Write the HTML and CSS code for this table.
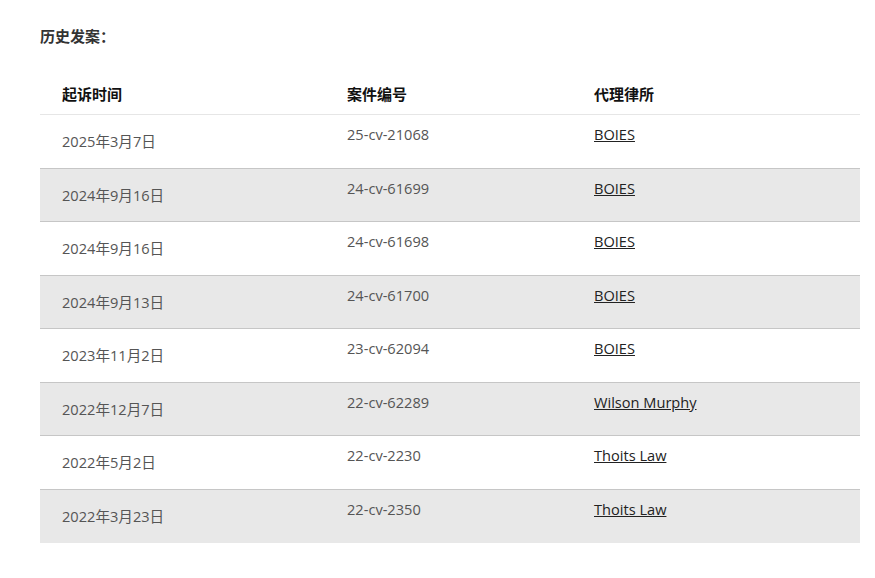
FILE: index.html
```html
<!DOCTYPE html>
<html lang="zh-CN">
<head>
<meta charset="utf-8">
<title>历史发案</title>
<link rel="stylesheet" href="styles.css">
</head>
<body>
<div class="page">
  <h3 class="title">历史发案：</h3>
  <table class="cases">
    <thead>
      <tr>
        <th class="c1">起诉时间</th>
        <th class="c2">案件编号</th>
        <th class="c3">代理律所</th>
      </tr>
    </thead>
    <tbody>
      <tr><td class="date">2025年3月7日</td><td>25-cv-21068</td><td><a href="#">BOIES</a></td></tr>
      <tr><td class="date">2024年9月16日</td><td>24-cv-61699</td><td><a href="#">BOIES</a></td></tr>
      <tr><td class="date">2024年9月16日</td><td>24-cv-61698</td><td><a href="#">BOIES</a></td></tr>
      <tr><td class="date">2024年9月13日</td><td>24-cv-61700</td><td><a href="#">BOIES</a></td></tr>
      <tr><td class="date">2023年11月2日</td><td>23-cv-62094</td><td><a href="#">BOIES</a></td></tr>
      <tr><td class="date">2022年12月7日</td><td>22-cv-62289</td><td><a href="#">Wilson Murphy</a></td></tr>
      <tr><td class="date">2022年5月2日</td><td>22-cv-2230</td><td><a href="#">Thoits Law</a></td></tr>
      <tr><td class="date">2022年3月23日</td><td>22-cv-2350</td><td><a href="#">Thoits Law</a></td></tr>
    </tbody>
  </table>
</div>
</body>
</html>
```

FILE: styles.css
```css
html, body {
  margin: 0;
  padding: 0;
  background: #fff;
}
.page {
  padding: 26px 15px 0 40px;
  font-family: "Open Sans", "Noto Sans CJK SC", sans-serif;
  font-size: 14.6px;
  line-height: 20px;
}
.title {
  margin: 0;
  font-size: 15px;
  font-weight: bold;
  line-height: 20px;
  color: #333;
}
.cases {
  margin-top: 27px;
  width: 820px;
  border-collapse: collapse;
  table-layout: fixed;
}
.cases th {
  text-align: left;
  font-size: 15px;
  font-weight: bold;
  color: #111;
  padding: 11px 0 10px 22px;
  line-height: 20px;
  border-bottom: 1px solid #e6e6e6;
}
.cases .c1 { width: 263px; }
.cases .c2 { width: 225px; }
.cases tbody tr {
  height: 53.5px;
  border-top: 1px solid #c6c6c6;
}
.cases tbody tr:first-child {
  border-top: none;
}
.cases tbody tr:nth-child(even) {
  background: #e8e8e8;
}
.cases td {
  padding: 9px 0 0 22px;
  vertical-align: top;
  color: #555;
  line-height: 20px;
}
.cases td.date {
  vertical-align: middle;
  padding-top: 0;
}
.cases a {
  color: #222;
  text-decoration: underline;
}
```
